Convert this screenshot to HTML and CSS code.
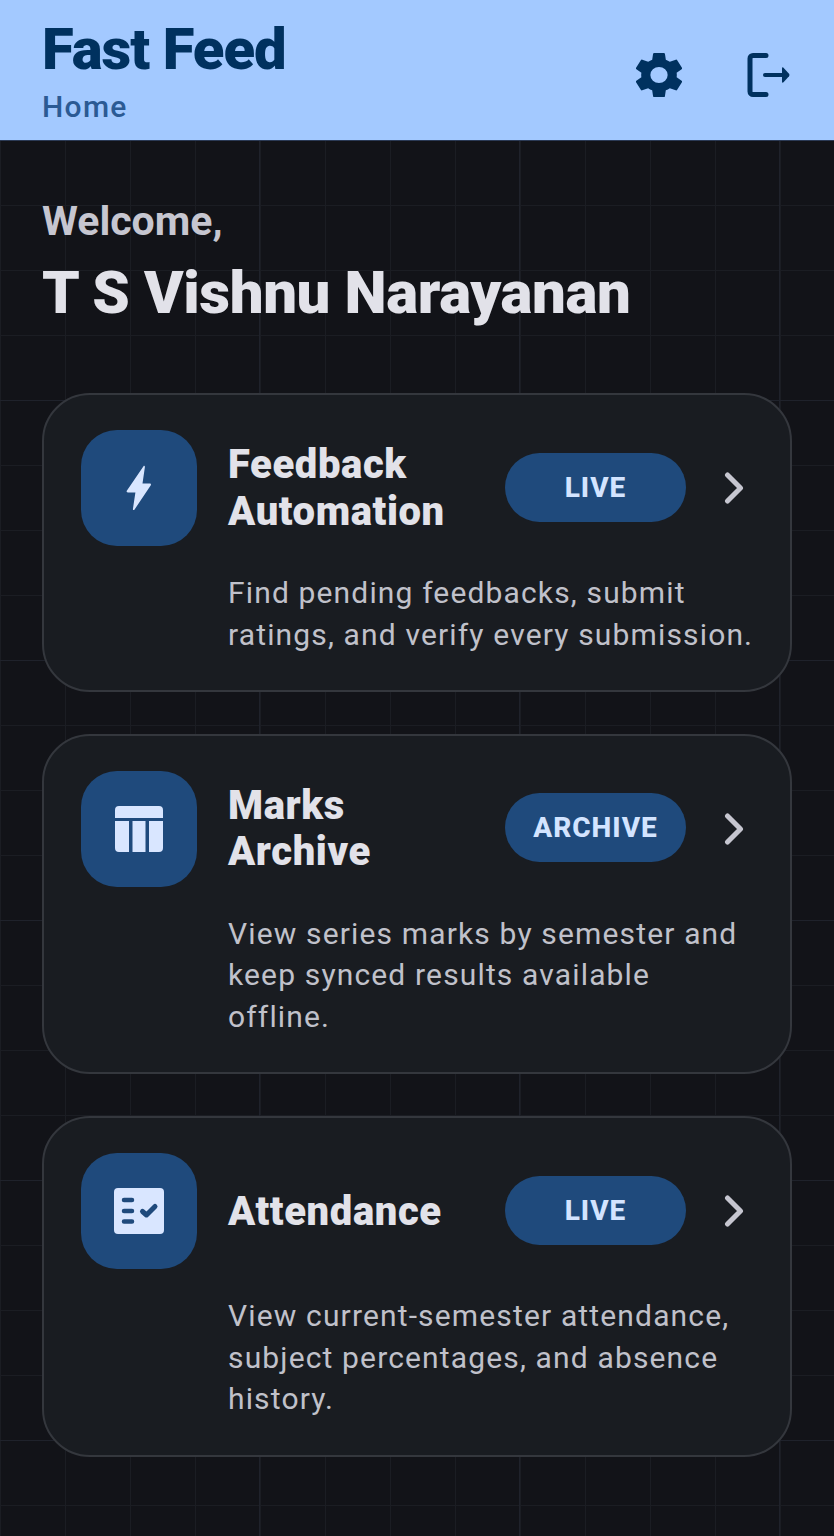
FILE: index.html
```html
<!DOCTYPE html>
<html lang="en">
<head>
<meta charset="utf-8">
<title>Fast Feed</title>
<link rel="stylesheet" href="styles.css">
</head>
<body>
<header class="appbar">
  <div class="appbar-titles">
    <h1 class="brand">Fast Feed</h1>
    <p class="crumb">Home</p>
  </div>
  <div class="appbar-actions">
    <svg class="gear" viewBox="2.7 2 18.6 20" preserveAspectRatio="none" aria-hidden="true"><path fill-rule="evenodd" d="M19.14 12.94c.04-.3.06-.61.06-.94 0-.32-.02-.64-.07-.94l2.03-1.58a.49.49 0 0 0 .12-.61l-1.92-3.32a.488.488 0 0 0-.59-.22l-2.39.96c-.5-.38-1.03-.7-1.62-.94l-.36-2.54a.484.484 0 0 0-.48-.41h-3.84c-.24 0-.43.17-.47.41l-.36 2.54c-.59.24-1.13.57-1.62.94l-2.39-.96c-.22-.08-.47 0-.59.22L2.74 8.87c-.12.21-.08.47.12.61l2.03 1.58c-.05.3-.09.63-.09.94s.02.64.07.94l-2.03 1.58a.49.49 0 0 0-.12.61l1.92 3.32c.12.22.37.29.59.22l2.39-.96c.5.38 1.03.7 1.62.94l.36 2.54c.05.24.24.41.48.41h3.84c.24 0 .44-.17.47-.41l.36-2.54c.59-.24 1.13-.56 1.62-.94l2.39.96c.22.08.47 0 .59-.22l1.92-3.32c.12-.22.07-.47-.12-.61l-2.01-1.58zM12 15.500A3.500 3.500 0 1 1 12 8.500a3.500 3.500 0 0 1 0 7z"/></svg>
    <svg class="logout" viewBox="0 0 44 44" aria-hidden="true"><path class="logout-door" d="M20 2.500H7a3 3 0 0 0-3 3v33a3 3 0 0 0 3 3h13"/><path class="logout-shaft" d="M19 22h20"/><path class="logout-head" d="M36 15.500q0-2 1.500-.8l5.500 6q1 1.300 0 2.600l-5.500 6q-1.500 1.200-1.500-.8z"/></svg>
  </div>
</header>
<main class="home">
  <section class="welcome">
    <p class="welcome-label">Welcome,</p>
    <h2 class="welcome-name">T S Vishnu Narayanan</h2>
  </section>
  <section class="cards">
    <article class="card">
      <div class="card-icon">
        <svg class="icon-bolt" viewBox="0 0 26 46" aria-hidden="true"><path d="M17.5 1.2c.6-.7 1.5-.2 1.4.7l-2.4 16.6h7.3c1 0 1.5 1 1 1.8L8.4 44.700c-.6.800-1.600.300-1.500-.6l2.500-16.600H1.800c-1 0-1.500-1-1-1.800z"/></svg>
      </div>
      <h3 class="card-title">Feedback Automation</h3>
      <span class="pill pill-live">LIVE</span>
      <svg class="chevron" viewBox="0 0 20 32" aria-hidden="true"><path d="M3.500 3l13 13-13 13"/></svg>
      <p class="card-desc">Find pending feedbacks, submit ratings, and verify every submission.</p>
    </article>
    <article class="card">
      <div class="card-icon">
        <svg class="icon-table" viewBox="0 0 48 46" aria-hidden="true"><path d="M4 0h40a4 4 0 0 1 4 4v8H0V4a4 4 0 0 1 4-4zM0 15h14v31H4a4 4 0 0 1-4-4zM17.500 15h13v31h-13zM34 15h14v27a4 4 0 0 1-4 4H34z"/></svg>
      </div>
      <h3 class="card-title">Marks Archive</h3>
      <span class="pill pill-archive">ARCHIVE</span>
      <svg class="chevron" viewBox="0 0 20 32" aria-hidden="true"><path d="M3.500 3l13 13-13 13"/></svg>
      <p class="card-desc">View series marks by semester and keep synced results available offline.</p>
    </article>
    <article class="card">
      <div class="card-icon">
        <svg class="icon-list" viewBox="0 0 50 46" aria-hidden="true"><rect class="list-sheet" width="50" height="46" rx="4"/><path class="list-ink" d="M10 12h8M10 23h8M10 33.500h8"/><path class="list-ink list-check" d="M28.500 23.500l4 3.500L41 18.500"/></svg>
      </div>
      <h3 class="card-title">Attendance</h3>
      <span class="pill pill-live">LIVE</span>
      <svg class="chevron" viewBox="0 0 20 32" aria-hidden="true"><path d="M3.500 3l13 13-13 13"/></svg>
      <p class="card-desc">View current-semester attendance, subject percentages, and absence history.</p>
    </article>
  </section>
</main>
</body>
</html>
```
FILE: styles.css
```css
* { box-sizing: border-box; }
html, body { margin: 0; padding: 0; }
body {
  width: 834px;
  height: 1536px;
  overflow: hidden;
  font-family: Roboto, "Liberation Sans", sans-serif;
  background-color: #121318;
}
h1, h2, h3, p { margin: 0; }

.appbar {
  height: 141px;
  background: #a3c9ff;
  border-bottom: 1px solid #2b3a55;
  display: flex;
  justify-content: space-between;
  padding: 20px 44px 0 42px;
}
.brand {
  font-size: 58px;
  line-height: 58px;
  font-weight: 900;
  letter-spacing: -1px;
  color: #00315f;
}
.crumb {
  margin-top: 9px;
  font-size: 30px;
  line-height: 40px;
  font-weight: 500;
  letter-spacing: 1.300px;
  color: #2b5a94;
}
.appbar-actions {
  display: flex;
  align-items: center;
  gap: 58px;
  height: 110px;
}
.gear { width: 46px; height: 46px; margin: 0 6px 0 0; fill: #00315f; }
.logout { width: 44px; height: 44px; fill: none; }
.logout-door { stroke: #00315f; stroke-width: 5px; stroke-linecap: round; fill: none; }
.logout-shaft { stroke: #00315f; stroke-width: 4px; stroke-linecap: round; }
.logout-head { fill: #00315f; }

.home {
  height: 1395px;
  padding: 57px 42px 0;
  background-color: #121318;
  background-image:
    linear-gradient(to right, #1f222b 1px, transparent 1px),
    linear-gradient(to bottom, #1f222b 1px, transparent 1px),
    linear-gradient(to right, #1b1d23 1px, transparent 1px),
    linear-gradient(to bottom, #1b1d23 1px, transparent 1px);
  background-size: 260px 260px, 260px 260px, 65px 65px, 65px 65px;
  background-position: -1px 0, 0 -1px, 0 0, 0 -1px;
}
.welcome-label {
  font-size: 41px;
  line-height: 46px;
  font-weight: 700;
  color: #c6c6d0;
}
.welcome-name {
  margin-top: 19px;
  font-size: 60px;
  line-height: 60px;
  font-weight: 900;
  letter-spacing: -0.400px;
  color: #e2e2e9;
}

.cards {
  margin-top: 70px;
  display: flex;
  flex-direction: column;
  gap: 41.900px;
}
.card {
  width: 750px;
  border: 2px solid #34373d;
  border-radius: 48px;
  background: #191c21;
  padding: 35px 34px 35px 37px;
  display: grid;
  grid-template-columns: 116px 308px 181px 70px;
  align-items: center;
}
.card-icon {
  grid-row: 1;
  grid-column: 1;
  width: 116px;
  height: 116px;
  border-radius: 36px;
  background: #1f4a7c;
  display: flex;
  align-items: center;
  justify-content: center;
}
.card-title {
  grid-row: 1;
  grid-column: 2;
  margin-top: 1px;
  padding-left: 31px;
  padding-right: 30px;
  font-size: 40px;
  line-height: 46.500px;
  font-weight: 900;
  letter-spacing: 0.600px;
  color: #e2e2e9;
}
.pill {
  grid-row: 1;
  grid-column: 3;
  height: 69px;
  margin-bottom: 2px;
  border-radius: 35px;
  background: #1f4a7c;
  display: flex;
  align-items: center;
  justify-content: center;
  font-size: 28px;
  font-weight: 800;
  letter-spacing: 1px;
  color: #d3e4ff;
}
.chevron {
  grid-row: 1;
  grid-column: 4;
  width: 20px;
  height: 32px;
  margin-left: 38px;
  fill: none;
  stroke: #c6c6d0;
  stroke-width: 5px;
  stroke-linecap: round;
  stroke-linejoin: round;
}
.card-desc {
  grid-row: 2;
  grid-column: 2 / 5;
  padding-left: 31px;
  margin-top: 26px;
  font-size: 30px;
  line-height: 41.500px;
  font-weight: 400;
  letter-spacing: 1.150px;
  color: #c0c1ca;
}

.icon-bolt { width: 26px; height: 46px; fill: #d9e6ff; }
.icon-table { width: 48px; height: 46px; fill: #d9e6ff; }
.icon-list { width: 50px; height: 46px; }
.list-sheet { fill: #d9e6ff; }
.list-ink { fill: none; stroke: #1f4a7c; stroke-width: 4.500px; stroke-linecap: round; stroke-linejoin: round; }
.list-check { stroke-width: 5px; }
```
